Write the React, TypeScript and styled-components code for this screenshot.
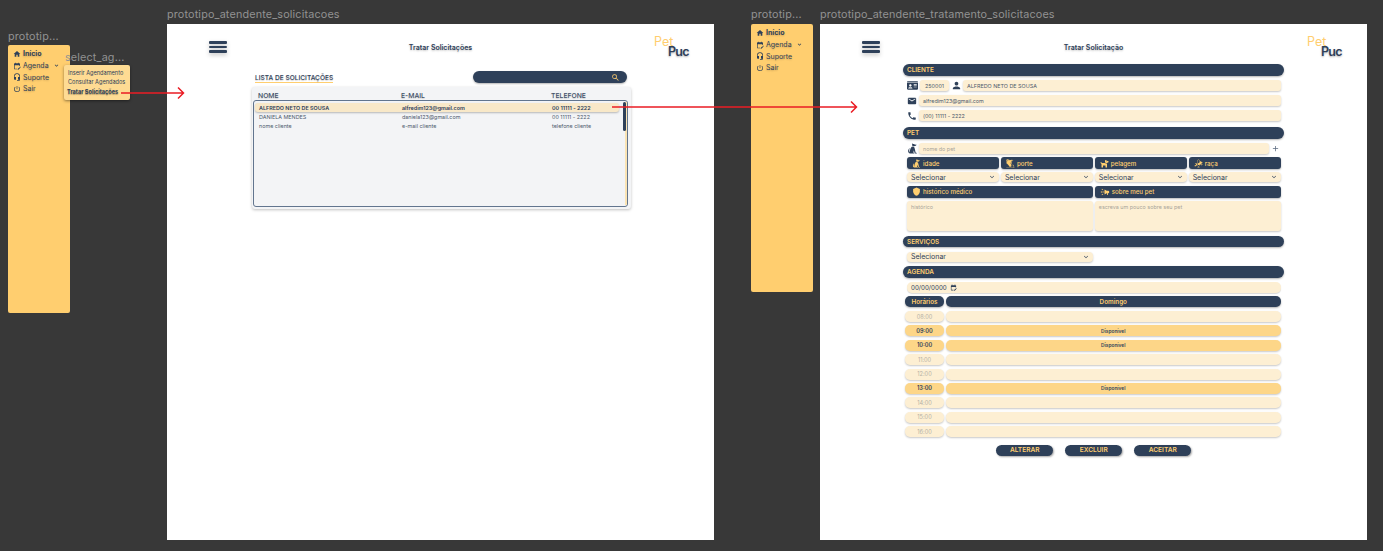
import React from 'react';
import styled, { createGlobalStyle } from 'styled-components';
import {
  MdHome,
  MdEditCalendar,
  MdPowerSettingsNew,
  MdHeadsetMic,
  MdExpandMore,
  MdSearch,
  MdPerson,
  MdEmail,
  MdPhone,
  MdAdd,
  MdShield,
  MdCampaign,
} from 'react-icons/md';
import { FaDog, FaIdCard } from 'react-icons/fa';
import { GiSittingDog, GiJumpingDog, GiSniffingDog } from 'react-icons/gi';

const NAVY = '#2e4059';
const AMBER = '#ffce6f';
const CREAM = '#fdefd3';
const SLOT = '#fdd688';

const GlobalStyle = createGlobalStyle`
  html, body { margin: 0; padding: 0; background: #383838; }
  * { box-sizing: border-box; }
  body { font-family: Inter, "Liberation Sans", sans-serif; overflow: hidden; }
`;

const Canvas = styled.div`
  position: relative;
  width: 1383px;
  height: 551px;
  background: #383838;
  overflow: hidden;
`;

const FrameLabel = styled.span<{ $x: number; $y: number }>`
  position: absolute;
  left: ${(p) => p.$x}px;
  top: ${(p) => p.$y}px;
  font-size: 10.8px;
  line-height: 14px;
  letter-spacing: 0.16px;
  color: #929292;
  white-space: nowrap;
  z-index: 4;
`;

const SideMenu = styled.nav<{ $x: number; $y: number }>`
  position: absolute;
  left: ${(p) => p.$x}px;
  top: ${(p) => p.$y}px;
  width: 62px;
  height: 268px;
  padding: 3px 5px;
  background: ${AMBER};
  border-radius: 2px;
  display: flex;
  flex-direction: column;
`;

const MenuItem = styled.div<{ $bold?: boolean }>`
  height: 11.7px;
  display: flex;
  align-items: center;
  gap: 2px;
  font-size: 7px;
  font-weight: ${(p) => (p.$bold ? 700 : 400)};
  color: ${NAVY};
  text-shadow: 0 1px 2px rgba(0, 0, 0, 0.2);
  white-space: nowrap;
  svg { flex: none; }
`;

const MenuChevron = styled(MdExpandMore)`
  margin-left: 2px;
`;

const SubMenu = styled.div`
  position: absolute;
  left: 64px;
  top: 65px;
  width: 66px;
  height: 35px;
  padding: 3.5px 0 0 4px;
  background: #fedb93;
  border-radius: 2px;
  box-shadow: 0 1px 3px rgba(0, 0, 0, 0.45);
  display: flex;
  flex-direction: column;
  z-index: 3;
`;

const SubItem = styled.div<{ $bold?: boolean }>`
  height: 9.6px;
  line-height: 9.6px;
  font-size: 5.6px;
  font-weight: ${(p) => (p.$bold ? 700 : 400)};
  margin-left: ${(p) => (p.$bold ? -1 : 0)}px;
  color: ${NAVY};
  text-shadow: ${(p) => (p.$bold ? '0 1px 1px rgba(0, 0, 0, 0.35)' : 'none')};
  white-space: nowrap;
`;

const Frame = styled.main<{ $x: number }>`
  position: absolute;
  left: ${(p) => p.$x}px;
  top: 24px;
  width: 547px;
  height: 516px;
  padding-top: 12px;
  background: #ffffff;
`;

const Header = styled.header`
  display: grid;
  grid-template-columns: 1fr auto 1fr;
  align-items: center;
  height: 22px;
  padding: 0 24px;
`;

const Burger = styled.div`
  width: 18px;
  margin-left: 18px;
  display: flex;
  flex-direction: column;
  gap: 2px;
  filter: drop-shadow(0 2px 2px rgba(0, 0, 0, 0.25));
  span {
    height: 2.4px;
    border-radius: 1px;
    background: ${NAVY};
  }
`;

const PageTitle = styled.h1`
  margin: 0;
  font-size: 7px;
  font-weight: 600;
  color: ${NAVY};
  text-shadow: 0 1px 2px rgba(0, 0, 0, 0.25);
`;

const Logo = styled.div`
  justify-self: end;
  width: 36px;
  margin-top: -1px;
  display: flex;
  flex-direction: column;
  line-height: 10px;
  font-size: 12.5px;
`;

const LogoPet = styled.span`
  color: ${AMBER};
  font-weight: 400;
`;

const LogoPuc = styled.span`
  margin-left: 14px;
  color: ${NAVY};
  font-weight: 600;
  letter-spacing: -0.7px;
  text-shadow: 0 1px 2px rgba(0, 0, 0, 0.3);
`;

/* lista de solicitacoes */

const ListPanel = styled.section`
  width: 379px;
  margin: 13px 0 0 85px;
`;

const ListTop = styled.div`
  height: 12px;
  margin-bottom: 4px;
  padding: 0 4px 0 3px;
  display: flex;
  align-items: center;
  justify-content: space-between;
`;

const ListTitle = styled.h2`
  margin: 3px 0 0;
  font-size: 6.6px;
  line-height: 8px;
  font-weight: 500;
  color: ${NAVY};
  border-bottom: 1px solid ${AMBER};
  text-shadow: 0 1px 1px rgba(0, 0, 0, 0.2);
`;

const SearchBar = styled.div`
  width: 154px;
  height: 12px;
  padding-right: 7px;
  border-radius: 6px;
  background: ${NAVY};
  box-shadow: 0 1px 2px rgba(0, 0, 0, 0.3);
  display: flex;
  align-items: center;
  justify-content: flex-end;
  color: ${AMBER};
`;

const ListCard = styled.div`
  height: 122px;
  padding-left: 1px;
  padding-right: 3px;
  border-radius: 3px;
  background: #f3f4f6;
  box-shadow: 0 1px 3px rgba(0, 0, 0, 0.25);
  display: flex;
  flex-direction: column;
`;

const TableCols = styled.div`
  display: grid;
  grid-template-columns: 143px 150px 1fr;
  align-items: center;
`;

const ListHead = styled(TableCols)`
  height: 13px;
  padding-left: 5px;
  padding-top: 3px;
  font-size: 6.8px;
  font-weight: 500;
  color: #3f5068;
  text-shadow: 0 1px 1px rgba(0, 0, 0, 0.15);
`;

const ListBox = styled.div`
  position: relative;
  height: 107px;
  padding: 2px 8px 0 1px;
  border: 1px solid #62758e;
  border-radius: 3px;
  display: flex;
  flex-direction: column;
`;

const ListRow = styled(TableCols)<{ $active?: boolean }>`
  height: 9.3px;
  padding-left: 4px;
  font-size: 5.4px;
  font-weight: ${(p) => (p.$active ? 600 : 400)};
  color: ${(p) => (p.$active ? NAVY : '#4d5a6c')};
  background: ${(p) => (p.$active ? '#f8e8c8' : 'transparent')};
  border-radius: 3px;
  box-shadow: ${(p) => (p.$active ? '0 1px 2px rgba(0, 0, 0, 0.25)' : 'none')};
  white-space: nowrap;
`;

const ScrollTrack = styled.div`
  position: absolute;
  top: 1px;
  right: 0;
  bottom: 1px;
  width: 2px;
  background: #fbe4b4;
`;

const ScrollThumb = styled.div`
  position: absolute;
  top: 1px;
  right: 1px;
  width: 3px;
  height: 29px;
  border-radius: 1.5px;
  background: ${NAVY};
`;

/* formulario de tratamento */

const Form = styled.div`
  width: 381px;
  margin: 6px 0 0 83px;
  display: flex;
  flex-direction: column;
`;

const SectionBar = styled.div`
  height: 11.5px;
  margin-bottom: 4.5px;
  padding-left: 4px;
  border-radius: 6px;
  background: ${NAVY};
  box-shadow: 0 1px 2px rgba(0, 0, 0, 0.3);
  color: ${AMBER};
  font-size: 6.4px;
  font-weight: 600;
  line-height: 13px;
`;

const SectionBody = styled.div<{ $gap: number; $after?: number }>`
  margin-bottom: ${(p) => p.$after ?? 0}px;
  padding: 0 3.5px 0 4px;
  display: flex;
  flex-direction: column;
  gap: ${(p) => p.$gap}px;
`;

const FieldRow = styled.div`
  display: flex;
  align-items: center;
  gap: 2px;
  color: ${NAVY};
  svg { flex: none; }
`;

const Pill = styled.div<{ $w?: number; $muted?: boolean; $center?: boolean }>`
  ${(p) => (p.$w ? `width: ${p.$w}px; flex: none;` : 'flex: 1;')}
  height: 11px;
  padding: 0 4px;
  border-radius: 3px;
  background: ${CREAM};
  box-shadow: 0 1px 2px rgba(0, 0, 0, 0.22);
  display: flex;
  align-items: center;
  justify-content: ${(p) => (p.$center ? 'center' : 'flex-start')};
  font-size: 5.4px;
  color: ${(p) => (p.$muted ? '#a9a59a' : '#4d5a6c')};
  white-space: nowrap;
`;

const IconBox = styled.span<{ $w: number }>`
  width: ${(p) => p.$w}px;
  flex: none;
  display: flex;
  justify-content: center;
  align-items: center;
`;

const Grid = styled.div<{ $cols: number }>`
  display: grid;
  grid-template-columns: repeat(${(p) => p.$cols}, 1fr);
  column-gap: 2px;
`;

const Chip = styled.div`
  height: 12px;
  padding-left: 5px;
  border-radius: 3px;
  background: ${NAVY};
  box-shadow: 0 1px 2px rgba(0, 0, 0, 0.28);
  color: ${AMBER};
  display: flex;
  align-items: center;
  gap: 2px;
  font-size: 6.2px;
  font-weight: 500;
  white-space: nowrap;
  svg { flex: none; }
`;

const Megaphone = styled(MdCampaign)`
  transform: scaleX(-1);
`;

const Select = styled.div<{ $w?: number }>`
  ${(p) => (p.$w ? `width: ${p.$w}px;` : '')}
  height: 10px;
  padding: 0 3px 0 4px;
  border-radius: 4px;
  background: ${CREAM};
  box-shadow: 0 1px 2px rgba(0, 0, 0, 0.22);
  display: flex;
  align-items: center;
  justify-content: space-between;
  font-size: 7px;
  color: ${NAVY};
`;

const TextArea = styled.div`
  height: 30px;
  padding: 3px 4px;
  border-radius: 3px;
  background: ${CREAM};
  box-shadow: 0 1px 2px rgba(0, 0, 0, 0.22);
  font-size: 5.4px;
  color: #a9a59a;
`;

const DateField = styled.div`
  height: 11px;
  padding-left: 4px;
  border-radius: 5px;
  background: ${CREAM};
  box-shadow: 0 1px 1px rgba(0, 0, 0, 0.15);
  display: flex;
  align-items: center;
  gap: 3px;
  font-size: 6.2px;
  color: ${NAVY};
`;

const Schedule = styled.div`
  margin-left: -2px;
  display: grid;
  grid-template-columns: 39px 1fr;
  column-gap: 2px;
  row-gap: 3.4px;
`;

const HeadCell = styled.div`
  height: 11px;
  margin-bottom: 0.4px;
  border-radius: 5px;
  background: ${NAVY};
  box-shadow: 0 1px 2px rgba(0, 0, 0, 0.3);
  color: ${AMBER};
  display: flex;
  align-items: center;
  justify-content: center;
  font-size: 6.3px;
  font-weight: 600;
`;

const SlotCell = styled.div<{ $open: boolean; $time?: boolean }>`
  height: 11px;
  border-radius: 5px;
  background: ${(p) => (p.$open ? SLOT : CREAM)};
  box-shadow: 0 1px 2px rgba(0, 0, 0, 0.22);
  display: flex;
  align-items: center;
  justify-content: center;
  font-size: ${(p) => (p.$time ? 5.6 : 4.8)}px;
  font-weight: ${(p) => (p.$open ? 600 : 400)};
  color: ${(p) => (p.$open ? NAVY : '#b4b0a6')};
`;

const Actions = styled.div`
  margin-top: 4.7px;
  display: flex;
  justify-content: center;
  gap: 12px;
`;

const ActionButton = styled.button`
  width: 57px;
  height: 11px;
  padding: 0;
  border: 0;
  border-radius: 6px;
  background: ${NAVY};
  box-shadow: 1px 1px 2px rgba(0, 0, 0, 0.35);
  color: ${AMBER};
  font-family: inherit;
  font-size: 6.6px;
  font-weight: 600;
`;

const ArrowSvg = styled.svg<{ $x: number; $y: number }>`
  position: absolute;
  left: ${(p) => p.$x}px;
  top: ${(p) => p.$y}px;
  z-index: 5;
`;

const Arrow = ({ x, y, length }: { x: number; y: number; length: number }) => (
  <ArrowSvg $x={x} $y={y - 7} width={length} height={14} viewBox={`0 0 ${length} 14`} fill="none">
    <path
      d={`M0 7H${length - 1.5}M${length - 7} 1.5L${length - 1.5} 7L${length - 7} 12.5`}
      stroke="#ea1c24"
      strokeWidth={1.5}
    />
  </ArrowSvg>
);

const Menu = ({ x, y }: { x: number; y: number }) => (
  <SideMenu $x={x} $y={y}>
    <MenuItem $bold>
      <MdHome size={8} />
      Início
    </MenuItem>
    <MenuItem>
      <MdEditCalendar size={8} />
      Agenda
      <MenuChevron size={7} />
    </MenuItem>
    <MenuItem>
      <MdHeadsetMic size={8} />
      Suporte
    </MenuItem>
    <MenuItem>
      <MdPowerSettingsNew size={8} />
      Sair
    </MenuItem>
  </SideMenu>
);

const PageHeader = ({ title }: { title: string }) => (
  <Header>
    <Burger>
      <span />
      <span />
      <span />
    </Burger>
    <PageTitle>{title}</PageTitle>
    <Logo>
      <LogoPet>Pet</LogoPet>
      <LogoPuc>Puc</LogoPuc>
    </Logo>
  </Header>
);

const requests = [
  { name: 'ALFREDO NETO DE SOUSA', email: 'alfredim123@gmail.com', phone: '00 11111 - 2222', active: true },
  { name: 'DANIELA MENDES', email: 'daniela123@gmail.com', phone: '00 11111 - 2222' },
  { name: 'nome cliente', email: 'e-mail cliente', phone: 'telefone cliente' },
];

const slots = [
  { time: '08:00', open: false },
  { time: '09:00', open: true },
  { time: '10:00', open: true },
  { time: '11:00', open: false },
  { time: '12:00', open: false },
  { time: '13:00', open: true },
  { time: '14:00', open: false },
  { time: '15:00', open: false },
  { time: '16:00', open: false },
];

const petChips = [
  { label: 'idade', icon: <GiSittingDog size={9} /> },
  { label: 'porte', icon: <GiSniffingDog size={9} /> },
  { label: 'pelagem', icon: <FaDog size={9} /> },
  { label: 'raça', icon: <GiJumpingDog size={9} /> },
];

const App: React.FC = () => (
  <Canvas>
    <GlobalStyle />
    <FrameLabel $x={8} $y={30}>prototip...</FrameLabel>
    <FrameLabel $x={65} $y={51}>select_ag...</FrameLabel>
    <FrameLabel $x={167} $y={8}>prototipo_atendente_solicitacoes</FrameLabel>
    <FrameLabel $x={751} $y={8}>prototip...</FrameLabel>
    <FrameLabel $x={820} $y={8}>prototipo_atendente_tratamento_solicitacoes</FrameLabel>

    <Menu x={8} y={45} />
    <SubMenu>
      <SubItem>Inserir Agendamento</SubItem>
      <SubItem>Consultar Agendados</SubItem>
      <SubItem $bold>Tratar Solicitações</SubItem>
    </SubMenu>

    <Frame $x={167}>
      <PageHeader title="Tratar Solicitações" />
      <ListPanel>
        <ListTop>
          <ListTitle>LISTA DE SOLICITAÇÕES</ListTitle>
          <SearchBar>
            <MdSearch size={9} />
          </SearchBar>
        </ListTop>
        <ListCard>
          <ListHead>
            <span>NOME</span>
            <span>E-MAIL</span>
            <span>TELEFONE</span>
          </ListHead>
          <ListBox>
            {requests.map((r) => (
              <ListRow key={r.name} $active={r.active}>
                <span>{r.name}</span>
                <span>{r.email}</span>
                <span>{r.phone}</span>
              </ListRow>
            ))}
            <ScrollTrack />
            <ScrollThumb />
          </ListBox>
        </ListCard>
      </ListPanel>
    </Frame>

    <Menu x={751} y={24} />

    <Frame $x={820}>
      <PageHeader title="Tratar Solicitação" />
      <Form>
        <SectionBar>CLIENTE</SectionBar>
        <SectionBody $gap={4} $after={6}>
          <FieldRow>
            <IconBox $w={11}><FaIdCard size={11} /></IconBox>
            <Pill $w={29} $center>250001</Pill>
            <IconBox $w={10}><MdPerson size={11} /></IconBox>
            <Pill>ALFREDO NETO DE SOUSA</Pill>
          </FieldRow>
          <FieldRow>
            <IconBox $w={10}><MdEmail size={10} /></IconBox>
            <Pill>alfredim123@gmail.com</Pill>
          </FieldRow>
          <FieldRow>
            <IconBox $w={10}><MdPhone size={10} /></IconBox>
            <Pill>(00) 11111 - 2222</Pill>
          </FieldRow>
        </SectionBody>

        <SectionBar>PET</SectionBar>
        <SectionBody $gap={3.2} $after={5}>
          <FieldRow>
            <IconBox $w={10}><GiSittingDog size={11} /></IconBox>
            <Pill $muted>nome do pet</Pill>
            <IconBox $w={10}><MdAdd size={9} color="#5c6b80" /></IconBox>
          </FieldRow>
          <Grid $cols={4}>
            {petChips.map((c) => (
              <Chip key={c.label}>
                {c.icon}
                {c.label}
              </Chip>
            ))}
          </Grid>
          <Grid $cols={4}>
            {petChips.map((c) => (
              <Select key={c.label}>
                Selecionar
                <MdExpandMore size={8} />
              </Select>
            ))}
          </Grid>
          <Grid $cols={2}>
            <Chip><MdShield size={9} />histórico médico</Chip>
            <Chip><Megaphone size={10} />sobre meu pet</Chip>
          </Grid>
          <Grid $cols={2}>
            <TextArea>histórico</TextArea>
            <TextArea>escreva um pouco sobre seu pet</TextArea>
          </Grid>
        </SectionBody>

        <SectionBar>SERVIÇOS</SectionBar>
        <SectionBody $gap={0} $after={4.5}>
          <Select $w={186}>
            Selecionar
            <MdExpandMore size={8} />
          </Select>
        </SectionBody>

        <SectionBar>AGENDA</SectionBar>
        <SectionBody $gap={3}>
          <DateField>
            00/00/0000
            <MdEditCalendar size={7} />
          </DateField>
          <Schedule>
            <HeadCell>Horários</HeadCell>
            <HeadCell>Domingo</HeadCell>
            {slots.map((s) => (
              <React.Fragment key={s.time}>
                <SlotCell $open={s.open} $time>{s.time}</SlotCell>
                <SlotCell $open={s.open}>{s.open ? 'Disponível' : ''}</SlotCell>
              </React.Fragment>
            ))}
          </Schedule>
          <Actions>
            <ActionButton>ALTERAR</ActionButton>
            <ActionButton>EXCLUIR</ActionButton>
            <ActionButton>ACEITAR</ActionButton>
          </Actions>
        </SectionBody>
      </Form>
    </Frame>

    <Arrow x={121} y={93} length={64} />
    <Arrow x={612} y={107} length={246} />
  </Canvas>
);

export default App;
